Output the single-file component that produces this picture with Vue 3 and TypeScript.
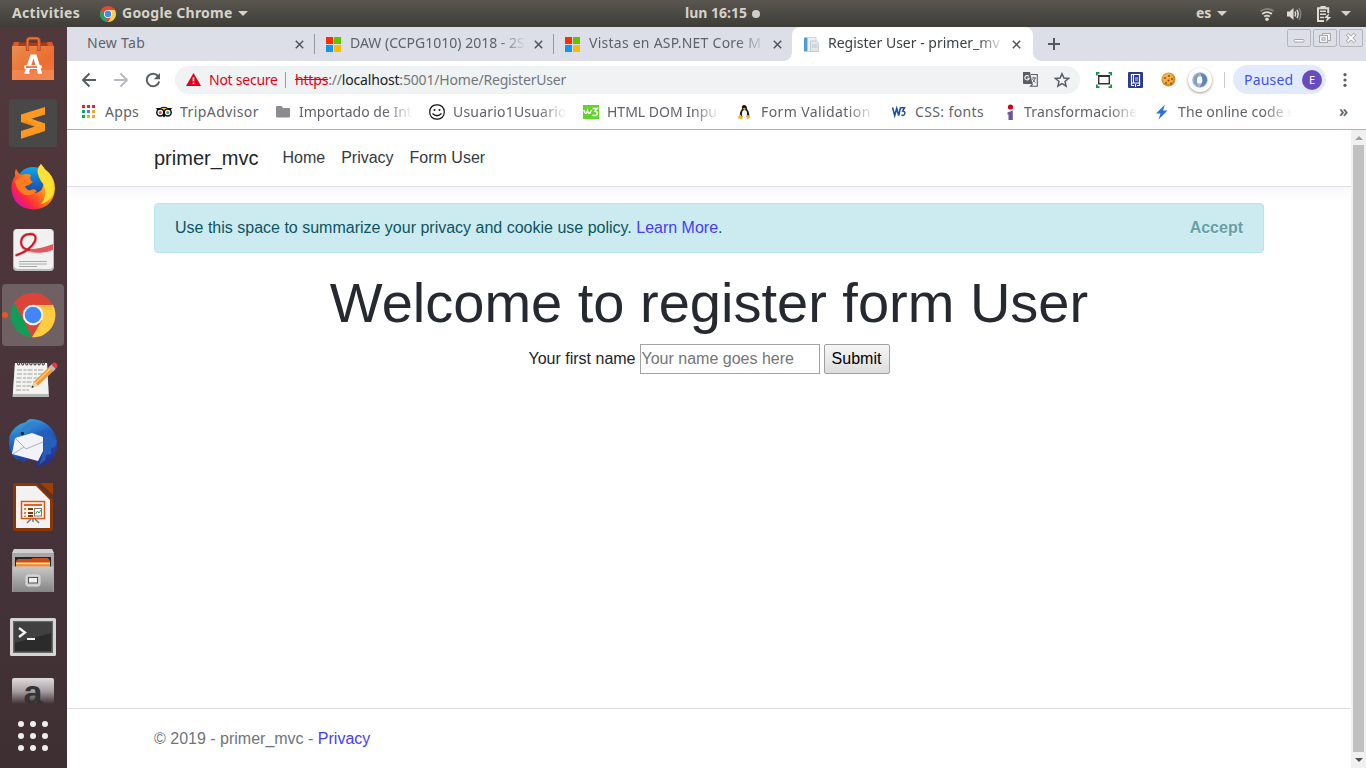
<script setup lang="ts">
interface Tab {
  title: string
  icon: 'none' | 'ms' | 'doc'
  active?: boolean
  spacing: number
}

interface Bookmark {
  label: string
  icon: string
  width: number
  spacing: number
  fade?: boolean
}

const tabs: Tab[] = [
  { title: 'New Tab', icon: 'none', spacing: 0.3 },
  { title: 'DAW (CCPG1010) 2018 - 2S', icon: 'ms', spacing: 0 },
  { title: 'Vistas en ASP.NET Core M', icon: 'ms', spacing: 0.25 },
  { title: 'Register User - primer_mv', icon: 'doc', active: true, spacing: 0 },
]

const bookmarks: Bookmark[] = [
  { label: 'Apps', icon: 'apps', width: 36, spacing: 0.3 },
  { label: 'TripAdvisor', icon: 'owl', width: 80, spacing: 0.42 },
  { label: 'Importado de Int', icon: 'folder', width: 114, spacing: 0, fade: true },
  { label: 'Usuario1Usuario', icon: 'smile', width: 114, spacing: 0.2, fade: true },
  { label: 'HTML DOM Inpu', icon: 'w3green', width: 114, spacing: 0, fade: true },
  { label: 'Form Validation', icon: 'tux', width: 114, spacing: 0.4, fade: true },
  { label: 'CSS: fonts', icon: 'w3', width: 70, spacing: 0.38 },
  { label: 'Transformacione', icon: 'info', width: 114, spacing: 0.15, fade: true },
  { label: 'The online code e', icon: 'bolt', width: 114, spacing: 0.1, fade: true },
]
</script>

<template>
  <div class="desktop">
    <header class="topbar">
      <div class="top-left">
        <span class="activities">Activities</span>
        <svg class="mini-chrome" width="16" height="16" viewBox="0 0 44 44">
          <circle cx="22" cy="22" r="22" fill="#e8453c" />
          <path d="M3 11 L13 27 L22 44 A22 22 0 0 1 3 11Z" fill="#1da462" />
          <path d="M22 11 H41 A22 22 0 0 1 22 44 L32 27Z" fill="#ffcd46" />
          <circle cx="22" cy="22" r="11" fill="#fff" />
          <circle cx="22" cy="22" r="8.8" fill="#4587f3" />
        </svg>
        <span class="app-name">Google Chrome</span>
        <i class="caret"></i>
      </div>
      <div class="clock"><span>lun 16:15</span><i class="dot"></i></div>
      <div class="top-right">
        <span class="lang">es</span><i class="caret"></i>
        <svg class="wifi" width="16" height="16" viewBox="0 0 16 16" fill="none" stroke-width="1.8">
          <path d="M1.5 5.2Q8 .4 14.5 5.2" stroke="#85827c" />
          <path d="M3.2 8Q8 4.3 12.8 8" stroke="#dfdbd2" />
          <path d="M5.2 10.6Q8 8.6 10.8 10.6" stroke="#dfdbd2" />
          <circle cx="8" cy="13.2" r="1.8" fill="#dfdbd2" />
        </svg>
        <svg class="sound" width="16" height="16" viewBox="0 0 16 16" fill="none" stroke="#dfdbd2" stroke-width="1.5">
          <path d="M1 5.5H3.5L7.5 2V14L3.5 10.5H1Z" fill="#dfdbd2" stroke="none" />
          <path d="M9 5.5Q10.3 8 9 10.5M11 3.8Q13.2 8 11 12.2" />
          <path d="M13 2Q16.4 8 13 14" stroke="#85827c" />
        </svg>
        <svg class="battery" width="16" height="18" viewBox="0 0 16 18">
          <path d="M12.2 8V3.2H2V16H8" fill="none" stroke="#dfdbd2" stroke-width="2" />
          <path d="M4.5 1H9.7V3H4.5ZM4 5.5H10V7H4ZM4 8.6H10V10.1H4ZM4 11.7H8V13.2H4Z" fill="#dfdbd2" />
          <path d="M13.3 8 8 13H11L9.8 17 15.3 12H12.2Z" fill="#dfdbd2" />
        </svg>
        <i class="caret"></i>
      </div>
    </header>

    <div class="workspace">
      <aside class="dock">
        <svg class="slot" viewBox="0 0 64 64">
          <defs>
            <linearGradient id="bag" x1="0" y1="0" x2="1" y2="1">
              <stop offset="0" stop-color="#e8904f" />
              <stop offset=".6" stop-color="#ee6c30" />
              <stop offset="1" stop-color="#ef7a42" />
            </linearGradient>
          </defs>
          <path d="M14 15.5H50L53 20H11Z" fill="#a83d17" />
          <path d="M11 20 13 15H18L17 20ZM53 20 51 15H46L47 20Z" fill="#d95b2b" />
          <rect x="11" y="19" width="42" height="34" fill="url(#bag)" />
          <rect x="11" y="43" width="42" height="10" fill="#f59361" opacity=".55" />
          <path d="M26.5 24V14Q26.5 11.5 29 11.5H35.5Q38 11.5 38 14V24" fill="none" stroke="#b94a22" stroke-width="3.4" />
          <path d="M26.5 23V14Q26.5 11.2 29 11.2H35.5Q38 11.2 38 14V23" fill="none" stroke="#e77543" stroke-width="1.5" />
          <path d="M25.5 46 31 29.500H34L39 46" fill="none" stroke="#fff" stroke-width="4" />
          <path d="M23.500 46H28.500M36.500 46H41" stroke="#fff" stroke-width="1.500" />
          <rect x="23" y="38" width="18" height="4" rx="2" fill="#fff" />
          <rect x="25" y="39.3" width="11" height="1.5" fill="#e95420" />
        </svg>

        <svg class="slot" viewBox="0 0 64 64">
          <rect x="8" y="8" width="48" height="48" rx="3" fill="#484848" />
          <path d="M44 16 20 23.5V31L34 35.500 20 40V47.700L44 40V32.500L30.500 27.700 44 23.500Z" fill="#ff9820" />
          <path d="M20 31 44 39.500 34 35.300 26 29.300Z" fill="#e98613" opacity=".6" />
        </svg>

        <svg class="slot" viewBox="0 0 64 64">
          <defs>
            <linearGradient id="fox" x1=".9" y1=".1" x2=".15" y2=".8">
              <stop offset="0" stop-color="#ffe226" />
              <stop offset=".35" stop-color="#ffb01e" />
              <stop offset=".6" stop-color="#ff6a1c" />
              <stop offset=".85" stop-color="#fb2a3f" />
              <stop offset="1" stop-color="#e5178a" />
            </linearGradient>
            <linearGradient id="globe" x1="0" y1="0" x2="0" y2="1">
              <stop offset="0" stop-color="#12a5ee" />
              <stop offset="1" stop-color="#1b2a86" />
            </linearGradient>
          </defs>
          <circle cx="32" cy="29" r="17" fill="url(#globe)" />
          <path d="M15 14Q17 18 20 20Q25 18 30 20Q28 22 30 26Q27 29 24 31Q26 37 33 38Q38 38 41 34Q45 26 37 19Q35 14 40 9Q43 14 48 18Q54 24 54 34Q52 54 32 54.5Q12 53 10.5 34Q10 27 14 21Q13 17 15 14Z" fill="url(#fox)" />
          <path d="M40 9Q43 14 48 18Q54 26 52.5 38Q49 47 40 49Q47 41 43 30Q36 22 37 15Q38 11 40 9Z" fill="#ffe034" />
          <path d="M14 26Q21 20 30 20.5Q27 25 32 27Q29 30 24 31Q25 36 30 35Q33 33 36 36Q31 41 24 40Q16 37 14 26Z" fill="#ff7c1f" />
        </svg>

        <svg class="slot" viewBox="0 0 64 64">
          <rect x="12" y="10" width="41" height="42" rx="4" fill="#bbb" />
          <rect x="13" y="10" width="39" height="40" rx="4" fill="#f1f1f1" />
          <path d="M14.5 36.5Q29 32 34 23Q37 14 29 15Q20.500 15.500 20 23Q20 31 29 32Q39 34 52 27" fill="none" stroke="#e7a0a0" stroke-width="3" />
          <path d="M14.5 36.5Q29 32 34 22Q36 15 29 15Q20.500 15.500 20 23Q20 30 29 31" fill="none" stroke="#c91620" stroke-width="1.8" />
          <path d="M29 30Q40 30 52 25V31Q40 36 29 32Z" fill="#de5a60" />
          <path d="M18 42.5H46M18 45H46M18 47.500H36" stroke="#aaa" stroke-width="1" />
        </svg>

        <svg class="slot" viewBox="0 0 64 64">
          <rect x="1" y="1" width="62" height="62" rx="4" fill="#6f6063" />
          <circle cx="32" cy="32" r="22.3" fill="#dc4437" />
          <path d="M13.2 20 22.7 37.3 31 54.3A22.3 22.3 0 0 1 13.2 20Z" fill="#109d58" />
          <path d="M32 22H52A22.3 22.3 0 0 1 31 54.3L41 37.3Z" fill="#ffcd41" />
          <path d="M32 21.7H52.2L51 28 39 24Z" fill="#d7a735" opacity=".3" />
          <circle cx="32" cy="32" r="10.3" fill="#f4f4f4" />
          <circle cx="32" cy="32" r="8.3" fill="#4285f4" />
        </svg>

        <svg class="slot" viewBox="0 0 64 64">
          <path d="M14 16H46L48 50H11.5Z" fill="#b9bab7" />
          <path d="M14 16H46L47.5 47H12Z" fill="#f3f4ef" />
          <path d="M16 23H43M16 27H42M15.5 31H41M15 35H36M15 39H32M15 43H28" stroke="#999" stroke-width=".9" stroke-dasharray="5 1.5 3 1" />
          <g fill="none" stroke="#444" stroke-width="1.1">
            <ellipse v-for="n in 7" :key="n" :cx="13.5 + n * 4.1" cy="15.5" rx="1.2" ry="2.5" />
          </g>
          <path d="M30.5 41 33 34.5 49 19 53 23.5 37 38.5Z" fill="#f29a38" />
          <path d="M34.5 36 50.5 20.5" stroke="#ffc87b" stroke-width="1.5" />
          <path d="M30.5 41 33 34.5 37 38.5Z" fill="#edd5aa" />
          <path d="M30.5 41 31.5 38.5 33 40Z" fill="#222" />
          <path d="M48 20 51 17 55 21.5 52.2 24.500Z" fill="#bbb" />
          <path d="M50.5 17.5Q53 14 56 17Q57.500 20 54.500 22Z" fill="#de3d45" />
        </svg>

        <svg class="slot" viewBox="0 0 64 64">
          <defs>
            <linearGradient id="bird" x1=".3" y1="0" x2=".7" y2="1">
              <stop offset="0" stop-color="#3fa7dd" />
              <stop offset=".4" stop-color="#1f5fbe" />
              <stop offset="1" stop-color="#2b2c86" />
            </linearGradient>
          </defs>
          <path d="M29 8Q26 9 25 11Q12 14 8.5 26Q7 38 12 45L16 49 19 48 22 52 28 48 38 52 34 56Q53 55 56 37Q57 20 44 12Q38 8 29 8Z" fill="url(#bird)" />
          <path d="M14 27 31 22 42 26V40L37 50 11 43Z" fill="#f1f3f8" />
          <path d="M14 27 25 38 42 31M12 43 23 36" fill="none" stroke="#aab0bc" stroke-width="1" />
          <path d="M21 18Q29 8 37 12Q31 14 29 19Q25 24 19 25Z" fill="#2f83cd" />
          <path d="M42 26Q40 22 34 23Q44 16 49 23L56 30 54 36 50 37 50 43 45 44 44 49 38 54Q44 42 42 26Z" fill="#245fbb" />
          <circle cx="21.5" cy="22.5" r="1.8" fill="#1c2635" />
        </svg>

        <svg class="slot" viewBox="0 0 64 64">
          <path d="M14 8H38L52 22V54Q52 56 50 56H14Q12 56 12 54V10Q12 8 14 8Z" fill="#8c3605" />
          <path d="M39 8H52V20Z" fill="#a33e03" />
          <path d="M15 11H35L49 25V53H15Z" fill="#f2f2f2" />
          <path d="M36 8 52 24" stroke="#47343a" stroke-width="1.5" />
          <rect x="20.5" y="26.5" width="23" height="17" fill="#fff4ea" stroke="#d35b1e" stroke-width="1.5" />
          <rect x="23" y="29" width="18" height="2" fill="#d9662d" />
          <path d="M23 33H25V35H23ZM23 37H25V39H23ZM23 40.5H25V42H23Z" fill="#e08256" />
          <path d="M27 33H32V35H27ZM27 37H32V39H27ZM27 40H32V42H27Z" fill="#8c3605" />
          <rect x="33.5" y="33.5" width="7" height="7.5" fill="#fff" stroke="#777" />
          <path d="M34.5 39 36.5 36 38 38 40 35" fill="none" stroke="#3a9a34" />
          <path d="M30 44 26 48M34 44 38 48M32 44V47" stroke="#777" stroke-width="1.5" />
        </svg>

        <svg class="slot" viewBox="0 0 64 64">
          <defs>
            <linearGradient id="cab" x1="0" y1="0" x2="0" y2="1">
              <stop offset="0" stop-color="#c8c8c8" />
              <stop offset="1" stop-color="#858585" />
            </linearGradient>
          </defs>
          <path d="M13 10H51L53 15V53H11V15Z" fill="#a7a7a7" />
          <path d="M13 10H51L53 14H11Z" fill="#cfcfcf" />
          <rect x="14" y="18" width="36" height="11" fill="#262626" />
          <path d="M15 22 17 20H30L32 19H47L49 22V28H15Z" fill="#c4501f" />
          <path d="M15 23H49V28H15Z" fill="#ed9346" />
          <path d="M15 24.5H49" stroke="#ffe5bd" stroke-width="1" />
          <rect x="11.5" y="27.5" width="41" height="25.5" rx="1" fill="url(#cab)" />
          <rect x="25" y="36" width="14" height="11" rx="2" fill="#cacaca" stroke="#dfdfdf" />
          <rect x="27.5" y="38.5" width="9" height="5.5" fill="#efefef" stroke="#555" />
        </svg>

        <svg class="slot" viewBox="0 0 64 64">
          <rect x="9" y="15" width="46" height="38" rx="1.5" fill="#d5d5d3" />
          <rect x="12" y="18" width="40" height="32" fill="#666" />
          <rect x="13.5" y="19.5" width="37" height="29" fill="#2b2b2b" />
          <path d="M13.5 19.5H50.5V30L13.5 40Z" fill="#404040" />
          <path d="M18 25 24 29.5 18 34" fill="none" stroke="#f2f2f2" stroke-width="2.3" />
          <path d="M26 36H34" stroke="#f2f2f2" stroke-width="2" />
        </svg>

        <div class="slot amazon">
          <div class="amazon-tile">a</div>
        </div>

        <svg class="slot" viewBox="0 0 64 64" fill="#f0efee">
          <template v-for="r in 3" :key="r">
            <circle v-for="c in 3" :key="c" :cx="8 + c * 12" :cy="8 + r * 12" r="3" />
          </template>
        </svg>
        <i class="running"></i>
      </aside>

      <main class="browser">
        <div class="tabstrip">
          <div v-for="tab in tabs" :key="tab.title" class="tab" :class="{ active: tab.active }">
            <svg v-if="tab.icon === 'ms'" class="fav" width="15" height="15" viewBox="0 0 15 15">
              <path d="M0 0H7V7H0Z" fill="#ff2a00" />
              <path d="M8 0H15V7H8Z" fill="#63c100" />
              <path d="M0 8H7V15H0Z" fill="#1595f0" />
              <path d="M8 8H15V15H8Z" fill="#ffb900" />
            </svg>
            <svg v-else-if="tab.icon === 'doc'" class="fav" width="15" height="15" viewBox="0 0 15 15">
              <rect x="0" y=".5" width="4" height="14" fill="#4f9bd6" />
              <path d="M3.5 .5H12V14.5H3.5Z" fill="#eef1f4" stroke="#c3c9d0" stroke-width=".7" />
              <path d="M6.5 4H12.5L14.6 6V14.5H6.5Z" fill="#e3e7ec" stroke="#b6bdc6" stroke-width=".7" />
              <path d="M8 8H13M8 10H13" stroke="#b6bdc6" stroke-width=".8" />
            </svg>
            <span class="tab-title" :class="{ fade: tab.icon !== 'none' }" :style="{ letterSpacing: tab.spacing + 'px' }">{{ tab.title }}</span>
            <svg class="close" width="9" height="9" viewBox="0 0 9 9"><path d="M.8 .8 8.2 8.2M8.2 .8 .8 8.2" stroke="#50545a" stroke-width="1.5" /></svg>
          </div>
          <svg class="plus" width="12" height="12" viewBox="0 0 12 12"><path d="M6 0V12M0 6H12" stroke="#55585d" stroke-width="2" /></svg>
          <div class="win-buttons">
            <span class="win"><svg width="22" height="16" viewBox="0 0 22 16"><rect x="6" y="9.5" width="10" height="2.5" rx="1" fill="#fff" stroke="#a5a5ab" /></svg></span>
            <span class="win"><svg width="22" height="16" viewBox="0 0 22 16" fill="#f4f5f8" stroke="#a5a5ab"><rect x="8.5" y="3.5" width="8" height="7" /><rect x="5.5" y="5.5" width="8" height="7" /><rect x="8" y="7.8" width="3" height="2.4" /></svg></span>
            <span class="win"><svg width="22" height="16" viewBox="0 0 22 16"><path d="M7 4 15 12M15 4 7 12" stroke="#a5a5ab" stroke-width="3.6" /><path d="M7.5 4.5 14.5 11.5M14.5 4.5 7.5 11.5" stroke="#fff" stroke-width="1.8" /></svg></span>
          </div>
        </div>

        <div class="toolbar">
          <svg class="nav-ico" width="16" height="16" viewBox="0 0 16 16" fill="none" stroke="#5a5d62" stroke-width="2"><path d="M15 8H2M8.5 1.5 2 8 8.5 14.5" /></svg>
          <svg class="nav-ico" width="16" height="16" viewBox="0 0 16 16" fill="none" stroke="#b9babd" stroke-width="2"><path d="M1 8H14M7.5 1.5 14 8 7.5 14.5" /></svg>
          <svg class="nav-ico reload" width="16" height="16" viewBox="0 0 16 16"><path d="M13 4A6.3 6.3 0 1 0 14.2 9.5" fill="none" stroke="#5a5d62" stroke-width="2" /><path d="M15 1V7.2H8.8Z" fill="#5a5d62" /></svg>

          <div class="omnibox">
            <svg width="15" height="13" viewBox="0 0 15 13"><path d="M7.5 0 15 13H0Z" fill="#e2001a" /><path d="M6.7 4.3H8.3V8.3H6.7ZM6.7 9.5H8.3V11.1H6.7Z" fill="#fff" /></svg>
            <span class="not-secure">Not secure</span>
            <i class="bar"></i>
            <span class="url"><s>https</s>://<b>localhost</b>:5001/Home/RegisterUser</span>
            <svg class="translate" width="15" height="15" viewBox="0 0 15 15">
              <path d="M0 0H7L9.5 12H1Q0 12 0 11Z" fill="#5a5d62" />
              <path d="M8 2.5H14.3V14.3H7.5L9.7 12" fill="none" stroke="#5a5d62" stroke-width="1.1" />
              <path d="M5.8 4.3A2.2 2.2 0 1 0 6.2 6.3H4.3" fill="none" stroke="#fff" stroke-width="1.1" />
              <path d="M8.8 6H13M10.9 4.8V6M12.3 6Q11.5 9 9.5 10.5M9.5 7Q10.5 9 12.5 10.5" fill="none" stroke="#5a5d62" stroke-width=".9" />
            </svg>
            <svg class="star" width="16" height="16" viewBox="0 0 16 16"><path d="M8 1.7 9.9 6 14.6 6.4 11 9.5 12.1 14.1 8 11.6 3.9 14.1 5 9.5 1.4 6.4 6.1 6Z" fill="none" stroke="#5a5d62" stroke-width="1.5" /></svg>
          </div>

          <svg class="ext-a" width="16" height="16" viewBox="0 0 16 16"><path d="M.9 3.500V.9H3.500M12.500 .9H15.100V3.500M15.100 12.500V15.100H12.500M3.500 15.100H.9V12.500" fill="none" stroke="#16963d" stroke-width="1.8" /><path d="M2.7 4.3H13.3V11.700H2.7Z" fill="none" stroke="#333" stroke-width="1.4" /><path d="M2 4H14" stroke="#333" stroke-width="2" /></svg>
          <svg class="ext-b" width="15" height="16" viewBox="0 0 15 16"><rect width="15" height="16" rx="1" fill="#2c3a93" /><path d="M3.500 2.5H11.500V11H3.500Z" fill="none" stroke="#fff" stroke-width="1.2" /><path d="M5.500 2.500V11" stroke="#fff" stroke-width="1" /><path d="M7 5H10V9H7Z" fill="#7d88c9" /><path d="M3.500 11V13.500H6M9 13.500H11.500V11M7.500 12V15" fill="none" stroke="#fff" stroke-width="1.200" /></svg>
          <svg class="ext-c" width="15" height="15" viewBox="0 0 15 15"><circle cx="7.5" cy="7.5" r="7" fill="#d98a2b" /><circle cx="6.8" cy="6.5" r="5.5" fill="#f0ae48" /><g fill="#8a4c12"><circle cx="4" cy="6" r=".9" /><circle cx="8" cy="4" r=".9" /><circle cx="7.5" cy="8.5" r="1" /><circle cx="11" cy="7" r=".9" /><circle cx="5" cy="11" r=".9" /><circle cx="10" cy="11.5" r="1" /></g></svg>
          <span class="ext-d">
            <svg width="16" height="16" viewBox="0 0 16 16"><circle cx="8" cy="8" r="5.7" fill="none" stroke="#a6bdd9" stroke-width="4.300" /><path d="M8 1Q15.500 2 15 9Q13 14.500 7.500 15Q13 9 8 1Z" fill="#5f83b2" /><path d="M7 15Q1 13 1.5 7Q3 2 8 1.5Q2 8 7 15Z" fill="#7f9fc6" /></svg>
          </span>
          <i class="divider"></i>
          <div class="profile"><span class="paused">Paused</span><span class="avatar">E</span></div>
          <svg class="kebab" width="4" height="14" viewBox="0 0 4 14" fill="#5a5d62"><circle cx="2" cy="1.7" r="1.6" /><circle cx="2" cy="7" r="1.6" /><circle cx="2" cy="12.3" r="1.6" /></svg>
        </div>

        <div class="bookmarks">
          <div v-for="b in bookmarks" :key="b.label" class="bookmark">
            <svg width="16" height="16" viewBox="0 0 16 16">
              <g v-if="b.icon === 'apps'">
                <path d="M1 1H4V4H1ZM6 1H9V4H6ZM11 1H14V4H11Z" fill="#e2233b" />
                <path d="M1 6H4V9H1ZM1 11H4V14H1Z" fill="#1aa260" />
                <path d="M6 6H9V9H6Z" fill="#4285f4" />
                <path d="M11 6H14V9H11ZM6 11H9V14H6ZM11 11H14V14H11Z" fill="#f5a623" />
              </g>
              <g v-else-if="b.icon === 'owl'">
                <path d="M0 4H4Q8 1.5 12 4H16L14.8 6 8 13.5 1.2 6Z" fill="#111" />
                <path d="M4.5 4.5Q8 3 11.5 4.5L8 7.5Z" fill="#f2c33d" />
                <circle cx="4.3" cy="8.5" r="3.5" fill="#fff" stroke="#111" stroke-width="1.5" />
                <circle cx="11.7" cy="8.5" r="3.5" fill="#fff" stroke="#111" stroke-width="1.5" />
                <circle cx="4.3" cy="8.5" r="1.5" fill="#ef4b3f" />
                <circle cx="11.7" cy="8.5" r="1.5" fill="#2aa356" />
              </g>
              <path v-else-if="b.icon === 'folder'" d="M2 2H6.5L8 4H14Q15 4 15 5V12.5Q15 13.5 14 13.5H2Q1 13.5 1 12.5V3Q1 2 2 2Z" fill="#8b8c91" />
              <g v-else-if="b.icon === 'smile'" fill="none" stroke="#111" stroke-width="1.2">
                <rect x=".8" y=".8" width="14.4" height="14.4" rx="6.5" />
                <path d="M3.5 9.500Q8 14 12.500 9.500" />
                <circle cx="5.5" cy="6" r=".4" fill="#111" /><circle cx="10.5" cy="6" r=".4" fill="#111" />
              </g>
              <g v-else-if="b.icon === 'w3green'">
                <rect y="1" width="16" height="14" fill="#64d42c" />
                <path d="M1 6Q1.5 10 3.5 9L4.5 6.5Q5 10 7 9L8.5 6" fill="none" stroke="#fff" stroke-width="1.4" />
                <path d="M9.5 4.5H14L12 7.3Q15 8 14 10.5Q12 12.5 9.5 11" fill="none" stroke="#fff" stroke-width="1.6" />
              </g>
              <g v-else-if="b.icon === 'tux'">
                <path d="M7 1Q10 1 10 5Q13 9 12 13H3Q2 9 5 5Q4.5 1 7 1Z" fill="#151515" />
                <ellipse cx="7.5" cy="10" rx="2.6" ry="4" fill="#f3f3f3" />
                <path d="M5.5 4.5 7.5 3.7 9 4.8 7.3 6Z" fill="#f0b81c" />
                <path d="M1 13 3.5 10.5 6 14 5 15.5 1.5 14.5ZM9.5 11 12.5 11.5 13.5 13.5 10 15.5Z" fill="#f1b91d" />
              </g>
              <g v-else-if="b.icon === 'w3'" fill="none" stroke="#1f4e9c">
                <path d="M1.500 3.500 3.7 11.5 5.700 4.500 7.7 11.5 9.500 3.5" stroke-width="1.600" />
                <path d="M9.5 3.8H13.500L11.6 7Q14.500 7.6 13.700 10Q12.5 12.300 10.5 10.900" stroke-width="1.5" />
              </g>
              <g v-else-if="b.icon === 'info'">
                <circle cx="10.5" cy="3" r="2.6" fill="#d4001f" />
                <path d="M7.5 8.5 12.8 6.5V16H8.5V10.5H7.5Z" fill="#6c549c" />
              </g>
              <path v-else d="M11 .5 2 9.5H6.5L4.500 15.5 13.5 6.6H9Z" fill="#2b70e0" />
            </svg>
            <span class="bm-label" :class="{ fade: b.fade }" :style="{ width: b.width + 'px', letterSpacing: b.spacing + 'px' }">{{ b.label }}</span>
          </div>
          <span class="more">»</span>
        </div>

        <div class="viewport">
          <div class="page">
            <nav class="navbar">
              <div class="container nav-inner">
                <a class="brand">primer_mvc</a>
                <a class="nav-link">Home</a>
                <a class="nav-link">Privacy</a>
                <a class="nav-link">Form User</a>
              </div>
            </nav>
            <div class="container content">
              <div class="alert">
                <span>Use this space to summarize your privacy and cookie use policy. <a>Learn More</a>.</span>
                <span class="accept">Accept</span>
              </div>
              <h1>Welcome to register form User</h1>
              <form class="form" @submit.prevent>
                <label for="first-name">Your first name</label>
                <input id="first-name" type="text" placeholder="Your name goes here" />
                <button type="submit">Submit</button>
              </form>
            </div>
            <footer class="footer">
              <div class="container">© 2019 - primer_mvc - <a>Privacy</a></div>
            </footer>
          </div>
          <div class="scrollbar">
            <i class="up"></i>
            <i class="thumb"></i>
            <i class="down"></i>
          </div>
        </div>
      </main>
    </div>
  </div>
</template>

<style>
html,
body {
  margin: 0;
  overflow: hidden;
}
</style>

<style scoped>
* {
  box-sizing: border-box;
}
.desktop {
  width: 1366px;
  height: 768px;
  display: flex;
  flex-direction: column;
  overflow: hidden;
  font-family: 'Noto Sans', 'Open Sans', sans-serif;
  font-size: 14px;
}
svg {
  flex: none;
  display: block;
}
.topbar {
  height: 27px;
  flex: none;
  display: grid;
  grid-template-columns: 685px 1fr auto;
  background: linear-gradient(#59564f, #3e3d38);
  color: #d6d2c9;
  font-weight: 700;
  font-size: 14px;
}
.top-left,
.clock,
.top-right {
  display: flex;
  align-items: center;
  white-space: nowrap;
}
.topbar span {
  line-height: 20px;
  padding-bottom: 1px;
}
.top-left {
  padding-left: 12px;
}
.activities {
  width: 88px;
  letter-spacing: 0.3px;
}
.app-name {
  width: 110px;
  margin: 0 6px;
  letter-spacing: 0.24px;
}
.caret {
  border: 5px solid transparent;
  border-top-color: #d6d2c9;
  border-bottom: 0;
}
.clock .dot {
  width: 8px;
  height: 8px;
  border-radius: 50%;
  background: #d0cdc6;
}
.clock span {
  width: 67px;
}
.top-right {
  padding-right: 15px;
}
.lang {
  width: 21px;
}
.wifi {
  margin-left: 32px;
}
.sound {
  margin-left: 11px;
}
.battery {
  margin: 0 9px 0 14px;
}
.workspace {
  flex: 1;
  display: flex;
  min-height: 0;
}
.dock {
  position: relative;
  width: 67px;
  flex: none;
  padding-left: 1px;
  background: linear-gradient(#51383b, #46333a 65%, #3e3032);
}
.slot {
  width: 64px;
  height: 64px;
}
.amazon {
  height: 37px;
  padding: 11px 11px 0;
  overflow: hidden;
}
.amazon-tile {
  height: 26px;
  border-radius: 2px 2px 0 0;
  background: linear-gradient(#dedcdd, #a9a1a4 50%, #43323700);
  color: #333;
  text-align: center;
  font: 700 34px/29px 'Liberation Sans', sans-serif;
}
.running {
  position: absolute;
  left: 2px;
  top: 285px;
  width: 6px;
  height: 6px;
  border-radius: 50%;
  background: #e95420;
}
.browser {
  flex: 1;
  display: flex;
  flex-direction: column;
  min-width: 0;
  background: #fff;
}
.tabstrip {
  height: 34px;
  flex: none;
  display: flex;
  align-items: center;
  padding-left: 9px;
  background: #dcdfe7;
}
.tab {
  width: 239px;
  flex: none;
  height: 34px;
  display: flex;
  align-items: center;
  padding: 0 11.5px 0 11px;
  color: #5f6268;
  position: relative;
}
.tab:not(.active):not(:nth-child(3))::after {
  content: '';
  position: absolute;
  right: 0;
  top: 7px;
  width: 1px;
  height: 20px;
  background: #95989f;
}
.tab.active {
  width: 241px;
  margin-left: -1px;
  background: #fff;
  border-radius: 8px 8px 0 0;
  color: #3c4043;
  padding-left: 12px;
  padding-right: 12.5px;
}
.tab.active::before,
.tab.active::after {
  content: '';
  position: absolute;
  bottom: 0;
  width: 8px;
  height: 8px;
}
.tab.active::before {
  left: -8px;
  background: radial-gradient(circle at 0 0, transparent 7.5px, #fff 8px);
}
.tab.active::after {
  right: -8px;
  background: radial-gradient(circle at 100% 0, transparent 7.5px, #fff 8px);
}
.fav {
  margin-right: 9px;
}
.tab-title {
  flex: 1;
  min-width: 0;
  margin-right: 7px;
  overflow: hidden;
  white-space: nowrap;
  line-height: 20px;
  padding-bottom: 2px;
}
.fade {
  -webkit-mask-image: linear-gradient(90deg, #000 calc(100% - 28px), transparent);
  mask-image: linear-gradient(90deg, #000 calc(100% - 28px), transparent);
}
.plus {
  margin-left: 15px;
}
.win-buttons {
  margin-left: auto;
  margin-right: 3px;
  align-self: flex-start;
  display: flex;
  gap: 2px;
  padding-top: 2px;
}
.win {
  width: 24px;
  height: 18px;
  border: 1px solid #b3b5bb;
  border-radius: 2px;
}
.toolbar {
  height: 38px;
  flex: none;
  display: flex;
  align-items: center;
  padding-bottom: 1px;
}
.nav-ico {
  margin-left: 14px;
  margin-right: 2px;
}
.nav-ico.reload {
  margin-right: 14px;
}
.omnibox {
  width: 905px;
  height: 28px;
  padding-left: 11px;
  border-radius: 14px;
  background: #eff3f4;
  display: flex;
  align-items: center;
  white-space: nowrap;
}
.not-secure {
  width: 76px;
  margin-left: 8px;
  letter-spacing: -0.25px;
  color: #e2001a;
}
.bar {
  width: 1px;
  height: 16px;
  margin-right: 9px;
  background: #9a9da1;
}
.url {
  letter-spacing: -0.18px;
  color: #73777c;
}
.url s {
  color: #e2001a;
}
.url b {
  font-weight: 400;
  color: #202124;
}
.translate {
  margin-left: auto;
}
.star {
  margin: 0 10px 0 16px;
}
.ext-a {
  margin-left: 16px;
}
.ext-b {
  margin-left: 16px;
}
.ext-c {
  margin-left: 18px;
}
.ext-d {
  width: 24px;
  height: 24px;
  margin-left: 12px;
  border-radius: 50%;
  display: grid;
  place-items: center;
  box-shadow: 0 1px 3px #0006;
}
.divider {
  width: 1px;
  height: 16px;
  margin: 0 8px 0 12px;
  background: #c9cbce;
}
.profile {
  width: 93px;
  height: 29px;
  padding: 0 4px 0 11px;
  border-radius: 15px;
  display: flex;
  align-items: center;
  justify-content: space-between;
  background: #e2eafe;
  color: #4353e8;
}
.paused {
  letter-spacing: 0.2px;
}
.avatar {
  width: 20px;
  height: 20px;
  border-radius: 50%;
  background: #6a4bbf;
  color: #fff;
  font-size: 11px;
  line-height: 20px;
  text-align: center;
}
.kebab {
  margin-left: 17px;
}
.bookmarks {
  height: 31px;
  flex: none;
  display: flex;
  align-items: flex-start;
  gap: 15px;
  padding: 5px 0 0 14px;
  border-bottom: 1px solid #b0b1b4;
  color: #5f6268;
}
.bookmark {
  display: flex;
  align-items: center;
  gap: 8px;
  height: 16px;
}
.bookmark:has(.fade) {
  margin-right: 1px;
}
.bm-label {
  overflow: hidden;
  white-space: nowrap;
  line-height: 22px;
}
.more {
  margin-left: 31px;
  line-height: 14px;
  font-size: 16px;
  font-weight: 600;
}
.viewport {
  flex: 1;
  display: flex;
  min-height: 0;
}
.page {
  flex: 1;
  display: flex;
  flex-direction: column;
  background: #fff;
  color: #212529;
  font: 16px/24px 'Liberation Sans', Arial, sans-serif;
}
.page a {
  color: #473cf8;
}
.container {
  width: 1110px;
  margin: 0 auto;
}
.navbar {
  height: 57px;
  border-bottom: 1px solid #dcdfe7;
  box-shadow: 0 4px 12px rgba(0, 0, 0, 0.05);
}
.nav-inner {
  height: 56px;
  display: flex;
  align-items: center;
}
.page .brand {
  color: #212529;
  font-size: 20px;
  margin-right: 16px;
}
.page .nav-link {
  color: #343a40;
  padding: 0 8px;
}
.content {
  flex: 1;
  padding-top: 16px;
}
.alert {
  height: 50px;
  padding: 0 20px;
  border: 1px solid #b8e5ea;
  border-radius: 4px;
  background: #ccebf0;
  color: #0c5460;
  display: flex;
  align-items: center;
  justify-content: space-between;
}
.accept {
  font-weight: 700;
  color: #66a0a8;
  text-shadow: 0 1px 0 #ffffff80;
}
h1 {
  margin: 16px 0 8px;
  font-size: 56px;
  font-weight: 400;
  line-height: 67px;
  text-align: center;
  color: #262930;
}
.form {
  display: flex;
  justify-content: center;
  align-items: center;
  gap: 4px;
}
.form input,
.form button {
  height: 30px;
  font: 16px/24px 'Liberation Sans', Arial, sans-serif;
}
.form input {
  width: 180px;
  padding: 1px;
  border: 1px solid #a2a2a2;
  border-radius: 0;
}
.form input::placeholder {
  color: #757575;
}
.form button {
  width: 66px;
  padding: 0;
  border: 1px solid #a0a0a0;
  border-radius: 2px;
  background: linear-gradient(#f6f6f6, #dddddd);
  color: #000;
}
.footer {
  height: 60px;
  border-top: 1px solid #dcdfe7;
  line-height: 60px;
  color: #6c757d;
}
.scrollbar {
  width: 15px;
  flex: none;
  display: flex;
  flex-direction: column;
  align-items: center;
  background: #f1f1f1;
}
.up {
  margin: 6px 0 5px;
  border: 4px solid transparent;
  border-bottom-color: #a0a0a0;
  border-top: 0;
}
.thumb {
  width: 11px;
  flex: 1;
  background: #c1c1c1;
}
.down {
  margin: 6px 0 6px;
  border: 4px solid transparent;
  border-top-color: #505050;
  border-bottom: 0;
}
</style>
